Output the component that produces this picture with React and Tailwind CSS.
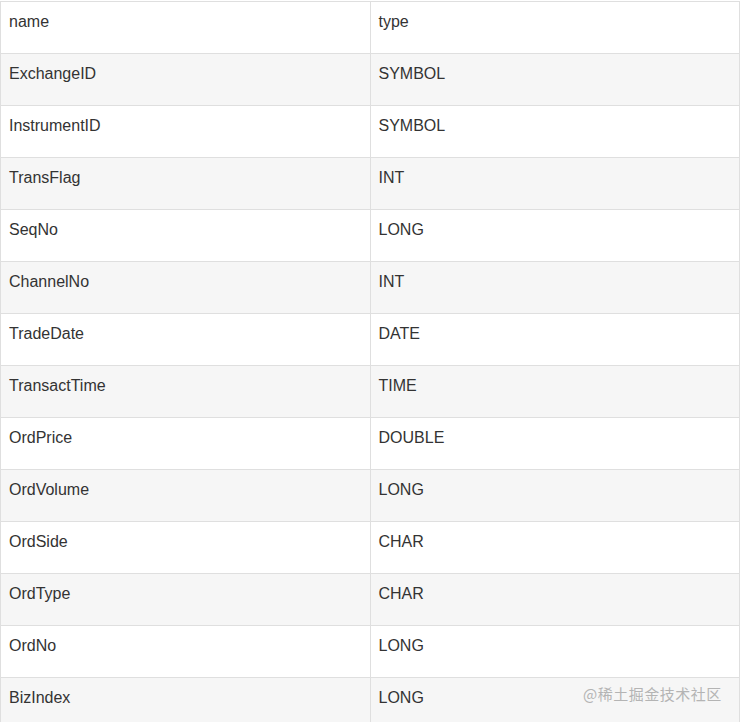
import React from 'react';

const rows = [
  ['ExchangeID', 'SYMBOL'],
  ['InstrumentID', 'SYMBOL'],
  ['TransFlag', 'INT'],
  ['SeqNo', 'LONG'],
  ['ChannelNo', 'INT'],
  ['TradeDate', 'DATE'],
  ['TransactTime', 'TIME'],
  ['OrdPrice', 'DOUBLE'],
  ['OrdVolume', 'LONG'],
  ['OrdSide', 'CHAR'],
  ['OrdType', 'CHAR'],
  ['OrdNo', 'LONG'],
  ['BizIndex', 'LONG'],
];

const cell = 'border border-[#dfdfdf] h-[52px] pl-[8px] pr-[9px] pt-[8px] align-top text-left font-normal';

const App = () => {
  return (
    <div className="relative w-[742px] h-[722px] overflow-hidden bg-white pt-px font-['Liberation_Sans',Arial,sans-serif] text-[16px] leading-[24px] text-[#333]">
      <table className="w-[740px] border-collapse table-fixed">
        <thead>
          <tr className="bg-white">
            <th className={cell}>name</th>
            <th className={cell}>type</th>
          </tr>
        </thead>
        <tbody>
          {rows.map(([name, type], i) => (
            <tr key={name} className={i % 2 === 0 ? 'bg-[#f6f6f6]' : 'bg-white'}>
              <td className={cell}>{name}</td>
              <td className={cell}>{type}</td>
            </tr>
          ))}
        </tbody>
      </table>

      {/* watermark */}
      <div className="absolute left-[583px] top-[684px] text-[15px] leading-[20px] tracking-[0.5px] text-[#b4b4b4] font-['Noto_Sans_CJK_SC',sans-serif] whitespace-nowrap">
        @稀土掘金技术社区
      </div>
    </div>
  );
};

export default App;
